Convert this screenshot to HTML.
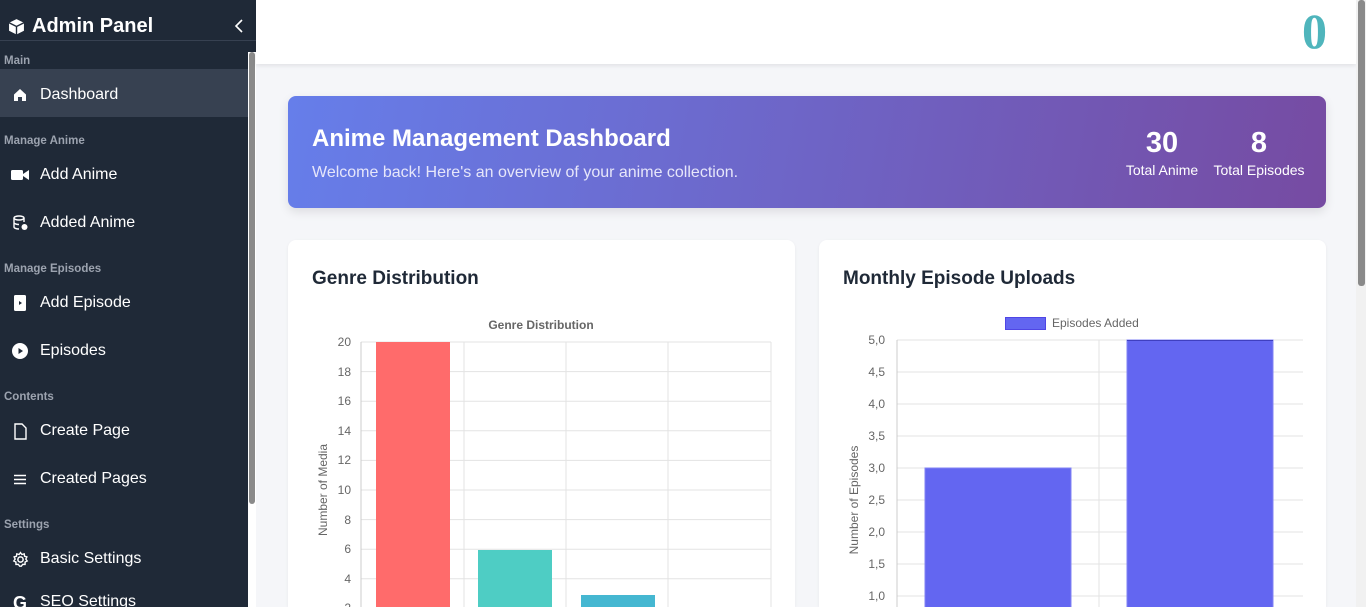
<!DOCTYPE html>
<html><head><meta charset="utf-8"><style>
*{margin:0;padding:0;box-sizing:border-box}
html{width:1366px;height:607px;overflow:hidden}
body{width:1366px;height:607px;overflow:hidden;background:#f5f6f9;font-family:"Liberation Sans",sans-serif;position:relative}
.sb{position:absolute;left:0;top:0;width:256px;height:607px;background:#1f2937;color:#fff;overflow:hidden}
.sbh{height:41px;border-bottom:1px solid #374151;display:flex;align-items:center;padding:12px 0 0 8px;font-weight:bold;font-size:20px}
.sec{position:absolute;left:4px;font-size:11.5px;font-weight:bold;color:#9ca3af}
.it{position:absolute;left:0;width:248px;height:48px;display:flex;align-items:center;padding-top:4px;font-size:16px;color:#fff}
.it .ic{width:40px;display:flex;justify-content:center}
.it.act{background:#374151}
.sbs{position:absolute;left:248px;top:52px;width:8px;height:555px;background:#fff}
.sbs i{position:absolute;left:1px;top:0;width:6px;height:452px;background:#8a8a8a;border-radius:3px}
.hdr{position:absolute;left:256px;top:0;width:1100px;height:64px;background:#fff;box-shadow:0 2px 4px rgba(0,0,0,.08)}
.ps{position:absolute;left:1356px;top:0;width:10px;height:607px;background:#f1f1f1}
.ps i{position:absolute;left:2px;top:0;width:7px;height:286px;background:#8a8a8a;border-radius:3px}
.ban{position:absolute;left:288px;top:96px;width:1038px;height:112px;border-radius:8px;background:linear-gradient(100deg,#667eea,#764ba2);color:#fff;box-shadow:0 4px 10px rgba(0,0,0,.1)}
.card{position:absolute;top:240px;width:507px;height:367px;background:#fff;border-radius:8px 8px 0 0;box-shadow:0 1px 3px rgba(0,0,0,.06);overflow:hidden}
.card h2{position:absolute;left:24px;top:28px;font-size:19px;color:#1f2937}
svg text{font-family:"Liberation Sans",sans-serif}
</style></head><body>
<div class="sb">
<div class="sbh"><svg width="17" height="17" viewBox="0 0 16 16" style="margin-right:7px"><path d="M8 1L15 4.5V12L8 15.5L1 12V4.5Z" fill="#fff"/><path d="M1 4.5L8 8L15 4.5M8 8V15.5" stroke="#1f2937" stroke-width="1.3" fill="none"/></svg>Admin Panel<svg style="position:absolute;left:234px;top:19px" width="10" height="14" viewBox="0 0 10 14"><path d="M8 1L2 7L8 13" stroke="#fff" stroke-width="1.6" fill="none"/></svg></div>
<div class="sec" style="top:55px">Main</div>
<div class="it act" style="top:69px"><span class="ic"><svg width="14" height="14" viewBox="0 0 14 14"><path d="M7 1L13 6.5V13H9V9H5V13H1V6.5Z" fill="#fff"/></svg></span>Dashboard</div>
<div class="sec" style="top:135px">Manage Anime</div>
<div class="it" style="top:149px"><span class="ic"><svg width="18" height="12" viewBox="0 0 18 12"><rect x="0" y="1" width="12" height="10" rx="1.5" fill="#fff"/><path d="M12 5L18 1V11L12 7Z" fill="#fff"/></svg></span>Add Anime</div>
<div class="it" style="top:197px"><span class="ic"><svg width="15" height="16" viewBox="0 0 15 16"><ellipse cx="6" cy="3" rx="5" ry="2" stroke="#fff" fill="none" stroke-width="1.4"/><path d="M1 3V12C1 13.2 3.5 14 6 14M11 3V7M1 7.5C1 8.6 3.5 9.5 6 9.5" stroke="#fff" fill="none" stroke-width="1.4"/><circle cx="11.5" cy="12" r="3" fill="#fff"/></svg></span>Added Anime</div>
<div class="sec" style="top:263px">Manage Episodes</div>
<div class="it" style="top:277px"><span class="ic"><svg width="12" height="16" viewBox="0 0 12 16"><rect width="12" height="16" rx="1.5" fill="#fff"/><path d="M5 6L8 8L5 10Z" fill="#1f2937"/></svg></span>Add Episode</div>
<div class="it" style="top:325px"><span class="ic"><svg width="16" height="16" viewBox="0 0 16 16"><circle cx="8" cy="8" r="8" fill="#fff"/><path d="M6.5 5L11 8L6.5 11Z" fill="#1f2937"/></svg></span>Episodes</div>
<div class="sec" style="top:391px">Contents</div>
<div class="it" style="top:405px"><span class="ic"><svg width="13" height="17" viewBox="0 0 13 17"><path d="M1 1H8L12 5V16H1Z" stroke="#fff" fill="none" stroke-width="1.4"/></svg></span>Create Page</div>
<div class="it" style="top:453px"><span class="ic"><svg width="12" height="11" viewBox="0 0 12 11"><path d="M0 1.5H12M0 5.5H12M0 9.5H12" stroke="#fff" stroke-width="1.5"/></svg></span>Created Pages</div>
<div class="sec" style="top:519px">Settings</div>
<div class="it" style="top:533px"><span class="ic"><svg width="17" height="17" viewBox="0 0 16 16"><circle cx="8" cy="8" r="2.5" stroke="#fff" fill="none" stroke-width="1.4"/><path d="M8 1.5L9.3 3.3L11.5 2.7L11.8 4.9L14 5.6L13 7.6L14.3 9.4L12.3 10.4L12.3 12.6L10.1 12.5L8.8 14.3L7.2 14.3L5.9 12.5L3.7 12.6L3.7 10.4L1.7 9.4L3 7.6L2 5.6L4.2 4.9L4.5 2.7L6.7 3.3Z" stroke="#fff" fill="none" stroke-width="1.3"/></svg></span>Basic Settings</div>
<div class="it" style="top:581px;height:26px;align-items:flex-start;padding-top:12px"><span class="ic" style="font-weight:bold;font-size:18px">G</span>SEO Settings</div>
<div class="sbs"><i></i></div>
</div>
<div class="hdr"><div style="position:absolute;left:1046px;top:6px;font-family:'Liberation Serif',serif;font-weight:bold;font-size:50px;line-height:50px;color:#4fb5bc">0</div></div>
<div class="ban">
<div style="position:absolute;left:24px;top:29px;font-size:24px;font-weight:bold">Anime Management Dashboard</div>
<div style="position:absolute;left:24px;top:68px;font-size:16px;color:#e6e6fa">Welcome back! Here's an overview of your anime collection.</div>
<div style="position:absolute;left:834px;top:31px;width:80px;text-align:center"><div style="font-size:29px;font-weight:bold">30</div><div style="font-size:14px;margin-top:2px">Total Anime</div></div>
<div style="position:absolute;left:920px;top:31px;width:102px;text-align:center"><div style="font-size:29px;font-weight:bold">8</div><div style="font-size:14px;margin-top:2px;white-space:nowrap">Total Episodes</div></div>
</div>
<div class="card" style="left:288px"><h2>Genre Distribution</h2>
<svg style="position:absolute;left:0;top:0" width="507" height="367">
<text x="253" y="89" font-size="12" font-weight="bold" fill="#666" text-anchor="middle">Genre Distribution</text>
<g stroke="#e3e3e3" stroke-width="1">
<line x1="73" y1="102" x2="483" y2="102"/><line x1="73" y1="131.6" x2="483" y2="131.6"/><line x1="73" y1="161.2" x2="483" y2="161.2"/><line x1="73" y1="190.8" x2="483" y2="190.8"/><line x1="73" y1="220.4" x2="483" y2="220.4"/><line x1="73" y1="250" x2="483" y2="250"/><line x1="73" y1="279.6" x2="483" y2="279.6"/><line x1="73" y1="309.2" x2="483" y2="309.2"/><line x1="73" y1="338.8" x2="483" y2="338.8"/>
<line x1="176" y1="102" x2="176" y2="367"/><line x1="278" y1="102" x2="278" y2="367"/><line x1="380" y1="102" x2="380" y2="367"/><line x1="483" y1="102" x2="483" y2="367"/>
</g>
<line x1="73" y1="102" x2="73" y2="367" stroke="#ccc"/>
<g font-size="12" fill="#666" text-anchor="end">
<text x="63" y="106">20</text><text x="63" y="136">18</text><text x="63" y="165">16</text><text x="63" y="195">14</text><text x="63" y="224">12</text><text x="63" y="254">10</text><text x="63" y="284">8</text><text x="63" y="313">6</text><text x="63" y="343">4</text><text x="63" y="372">2</text></g>
<text transform="translate(39,250) rotate(-90)" font-size="12" fill="#666" text-anchor="middle">Number of Media</text>
<rect x="88" y="102" width="74" height="265" fill="#ff6b6b"/>
<rect x="190" y="310" width="74" height="57" fill="#4ecdc4"/>
<rect x="293" y="355" width="74" height="12" fill="#45b7d1"/>
</svg></div>
<div class="card" style="left:819px"><h2>Monthly Episode Uploads</h2>
<svg style="position:absolute;left:0;top:0" width="507" height="367">
<rect x="186.5" y="77.5" width="40" height="12" fill="#6366f1" stroke="#4f46e5"/>
<text x="233" y="87" font-size="12" fill="#666">Episodes Added</text>
<g stroke="#e3e3e3">
<line x1="78" y1="100" x2="484" y2="100"/><line x1="78" y1="132" x2="484" y2="132"/><line x1="78" y1="164" x2="484" y2="164"/><line x1="78" y1="196" x2="484" y2="196"/><line x1="78" y1="228" x2="484" y2="228"/><line x1="78" y1="260" x2="484" y2="260"/><line x1="78" y1="292" x2="484" y2="292"/><line x1="78" y1="324" x2="484" y2="324"/><line x1="78" y1="356" x2="484" y2="356"/>
<line x1="280" y1="100" x2="280" y2="367"/></g>
<line x1="78" y1="100" x2="78" y2="367" stroke="#ccc"/>
<g font-size="12" fill="#666" text-anchor="end">
<text x="66" y="104">5,0</text><text x="66" y="136">4,5</text><text x="66" y="168">4,0</text><text x="66" y="200">3,5</text><text x="66" y="232">3,0</text><text x="66" y="264">2,5</text><text x="66" y="296">2,0</text><text x="66" y="328">1,5</text><text x="66" y="360">1,0</text></g>
<text transform="translate(39,260) rotate(-90)" font-size="12" fill="#666" text-anchor="middle">Number of Episodes</text>
<rect x="106" y="228" width="146" height="140" fill="#6366f1" stroke="#8183f4"/>
<rect x="308" y="100" width="146" height="268" fill="#6366f1" stroke="#8183f4"/>
<line x1="308" y1="100.5" x2="454" y2="100.5" stroke="#3f3fc0"/>
</svg></div>
<div class="ps"><i></i></div>
</body></html>
